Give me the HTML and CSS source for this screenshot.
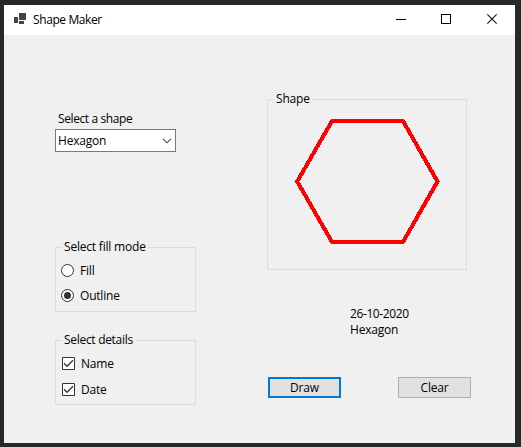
FILE: index.html
```html
<!DOCTYPE html>
<html lang="en">
<head>
<meta charset="utf-8">
<title>Shape Maker</title>
<link rel="stylesheet" href="styles.css">
</head>
<body>
<div class="window">
  <header class="titlebar">
    <svg class="app-icon" width="14" height="14" shape-rendering="crispEdges"><path fill="#444" d="M0 4h4v6H0zM5 0h7v7H5zM5 8h5v3H5z"/></svg>
    <h1 class="title">Shape Maker</h1>
    <div class="controls">
      <svg width="46" height="30" shape-rendering="crispEdges"><path fill="#000" d="M19 14h10v1H19z"/></svg>
      <svg width="46" height="30" shape-rendering="crispEdges"><path fill="none" stroke="#000" d="M18.500 9.500h9v9h-9z"/></svg>
      <svg width="46" height="30"><path fill="none" stroke="#111" stroke-width="1.100" d="M18.300 9.300l9.400 9.400M27.700 9.300l-9.400 9.400"/></svg>
    </div>
  </header>
  <main class="form">
    <section class="options">
      <label class="caption">Select a shape</label>
      <div class="combo"><span>Hexagon</span><svg width="10" height="6"><path fill="none" stroke="#444" stroke-width="1.100" d="M1 .8l4 4 4-4"/></svg></div>
      <fieldset class="group modes">
        <legend>Select fill mode</legend>
        <label class="choice"><svg width="13" height="13"><circle cx="6.500" cy="6.500" r="6" fill="#fff" stroke="#333"/></svg><span>Fill</span></label>
        <label class="choice"><svg width="13" height="13"><circle cx="6.500" cy="6.500" r="6" fill="#fff" stroke="#333"/><circle cx="6.500" cy="6.500" r="3.500" fill="#333"/></svg><span>Outline</span></label>
      </fieldset>
      <fieldset class="group details">
        <legend>Select details</legend>
        <label class="choice"><svg width="13" height="13"><path fill="#fff" stroke="#333" d="M.5.5h12v12H.5z"/><path fill="none" stroke="#333" stroke-width="1.300" d="M2 6.300l3 3L11 3.200"/></svg><span>Name</span></label>
        <label class="choice"><svg width="13" height="13"><path fill="#fff" stroke="#333" d="M.5.5h12v12H.5z"/><path fill="none" stroke="#333" stroke-width="1.300" d="M2 6.300l3 3L11 3.200"/></svg><span>Date</span></label>
      </fieldset>
    </section>
    <section class="result">
      <fieldset class="group canvas">
        <legend>Shape</legend>
        <svg class="hexagon" width="146" height="126" shape-rendering="crispEdges"><path fill="none" stroke="red" stroke-width="4" d="M38 3h71L143.500 63.500 109 124H38L3.200 63.500z"/></svg>
      </fieldset>
      <div class="info"><div class="date">26-10-2020</div><div>Hexagon</div></div>
      <div class="actions">
        <button class="btn primary">Draw</button>
        <button class="btn">Clear</button>
      </div>
    </section>
  </main>
</div>
</body>
</html>
```
FILE: styles.css
```css
* { box-sizing: border-box; }
body {
  margin: 0;
  height: 447px;
  padding: 5px 6px 4px 4px;
  overflow: hidden;
  background: #272829;
  font: 12px/16px "Open Sans", "Noto Sans", sans-serif;
  letter-spacing: -0.2px;
  color: #000;
}
svg { display: block; flex: none; }
.window { height: 438px; background: #f0f0f0; }
.titlebar { display: flex; height: 30px; padding-left: 10px; background: #fff; }
.app-icon { margin-top: 8px; }
.title {
  margin: 7px 0 0 5px;
  font-size: 12px;
  font-weight: 400;
  letter-spacing: -0.4px;
  white-space: nowrap;
}
.controls { display: flex; margin-left: auto; }
.form { display: flex; gap: 71px; padding: 56px 0 0 51px; }
.options { width: 141px; padding-top: 20px; }
.caption { display: block; padding-left: 3px; letter-spacing: -0.4px; }
.combo {
  display: flex;
  align-items: center;
  justify-content: space-between;
  width: 121px;
  height: 23px;
  margin-top: 2px;
  padding: 0 3px 0 2px;
  border: 1px solid #7a7a7a;
  background: #fff;
}
.group {
  min-width: 0;
  margin: 0;
  padding: 0;
  border: 1px solid #dcdcdc;
}
.group legend { height: 16px; margin-left: 6px; padding: 0 2px; white-space: nowrap; }
.modes { height: 73px; margin-top: 87px; padding-left: 5px; }
.modes legend { margin-left: 1px; }
.details { height: 73px; margin-top: 20px; padding-left: 6px; }
.details legend { margin-left: 0; letter-spacing: -0.3px; }
.choice { display: flex; align-items: center; gap: 6px; height: 16px; }
.choice span { margin-top: 2px; }
.modes .choice { margin-top: 9px; }
.modes .choice:first-of-type { margin-top: 7px; }
.details .choice { margin-top: 10px; }
.details .choice:first-of-type { margin-top: 7px; }
.result { width: 204px; }
.canvas { width: 200px; height: 179px; }
.hexagon { margin: 11px 0 0 26px; }
.info { margin-top: 36px; padding-left: 83px; }
.date { letter-spacing: -0.4px; }
.actions { display: flex; gap: 57px; margin: 39px 0 0 1px; }
.btn {
  width: 73px;
  height: 21px;
  padding: 0;
  border: 1px solid #adadad;
  background: #e1e1e1;
  font: inherit;
  letter-spacing: inherit;
  line-height: 17px;
  color: #000;
}
.primary { border: 2px solid #0078d7; }
```
